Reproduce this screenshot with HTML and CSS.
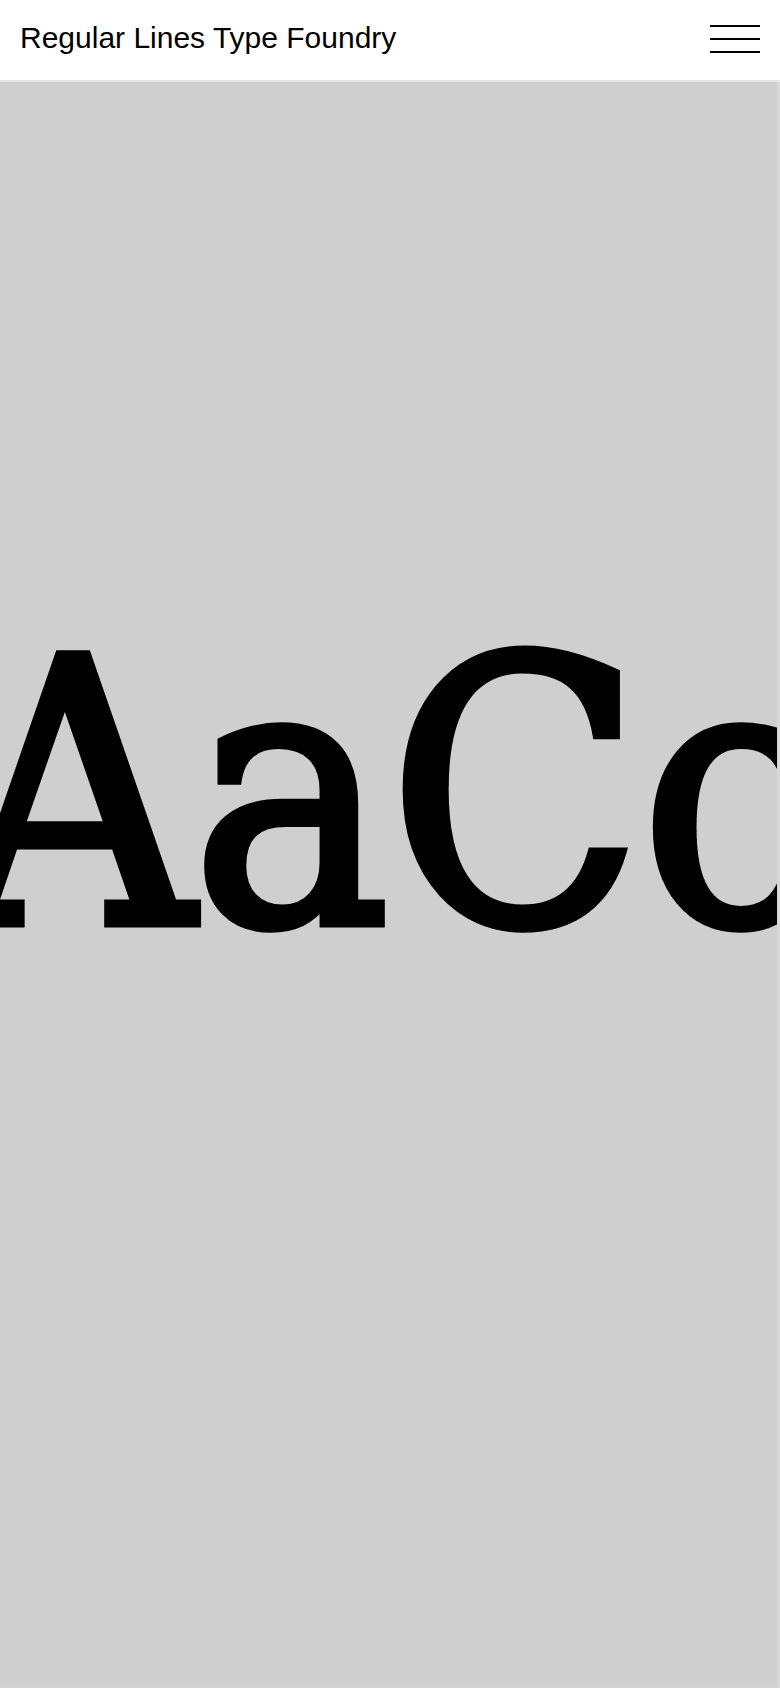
FILE: index.html
```html
<!DOCTYPE html>
<html lang="en">
<head>
<meta charset="utf-8">
<title>Regular Lines Type Foundry</title>
<link rel="stylesheet" href="styles.css">
</head>
<body>
<header class="site-header">
  <a class="brand" href="#">Regular Lines Type Foundry</a>
  <button class="menu-toggle" aria-label="Menu">
    <span class="bar"></span>
    <span class="bar"></span>
    <span class="bar"></span>
  </button>
</header>
<main class="hero">
  <div class="specimen">AaCc</div>
</main>
</body>
</html>
```
FILE: styles.css
```css
* { box-sizing: border-box; }
html, body { margin: 0; padding: 0; }
body {
  width: 780px;
  height: 1688px;
  display: flex;
  flex-direction: column;
  font-family: "Liberation Sans", Arial, sans-serif;
  background: #ffffff;
  color: #000;
  overflow: hidden;
}
.site-header {
  height: 82px;
  flex: none;
  display: flex;
  align-items: center;
  justify-content: space-between;
  padding: 0 20px 0 20px;
  border-bottom: 2px solid #e6e6e6;
}
.brand {
  font-size: 30px;
  color: #000;
  text-decoration: none;
  margin-top: -4px;
}
.menu-toggle {
  width: 50px;
  height: 28px;
  padding: 0;
  border: 0;
  background: transparent;
  display: flex;
  flex-direction: column;
  justify-content: space-between;
  margin-top: -3px;
}
.menu-toggle .bar {
  display: block;
  height: 2px;
  width: 100%;
  background: #000;
}
.hero {
  flex: 1;
  background: #cfcfcf;
  overflow: hidden;
  padding-top: 530px;
  border-right: 3px solid #d8d8d8;
  border-bottom: 2px solid #d4d4d4;
}
.specimen {
  font-family: "DejaVu Serif Condensed", "DejaVu Serif", serif;
  font-weight: normal;
  font-size: 368px;
  line-height: 1;
  white-space: nowrap;
  margin-left: -46px;
  letter-spacing: -1px;
  -webkit-text-stroke: 9px #000;
  color: #000;
}
```
